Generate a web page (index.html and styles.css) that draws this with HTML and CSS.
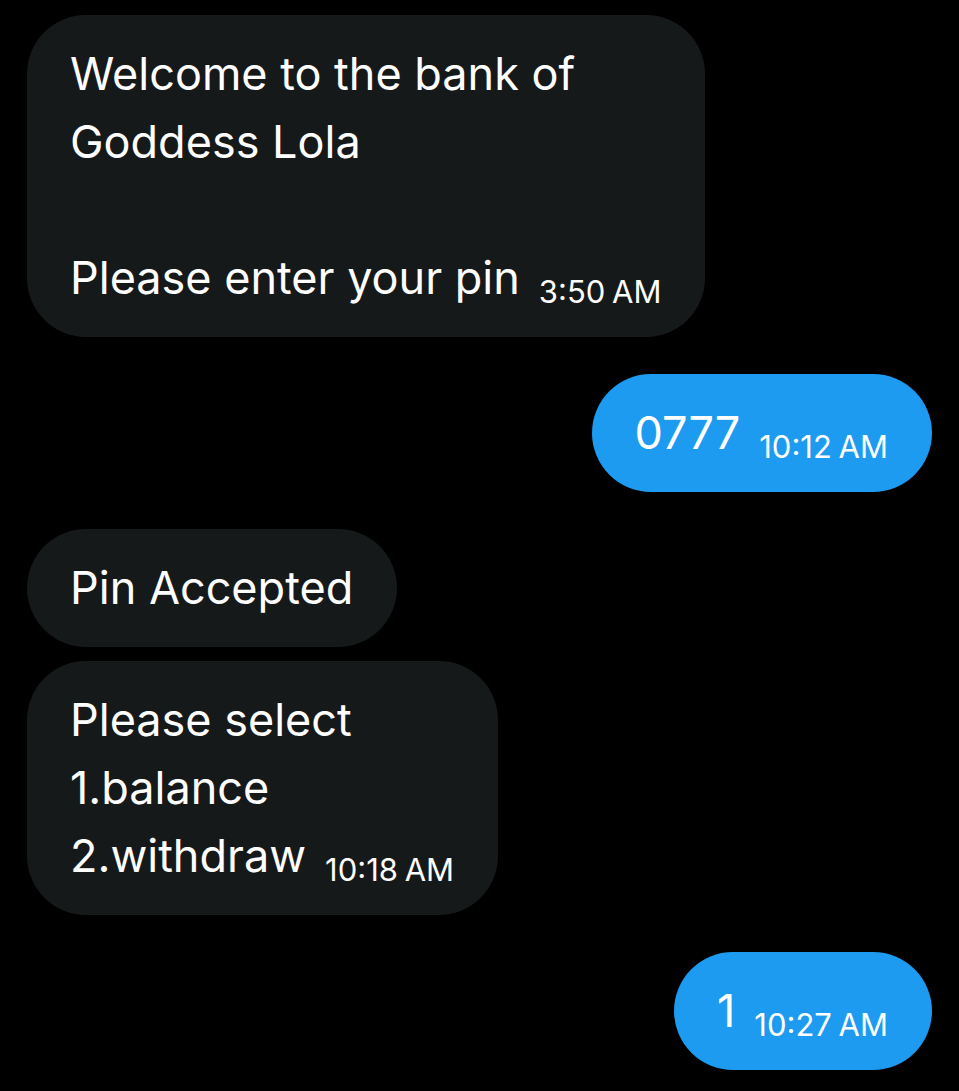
FILE: index.html
```html
<!DOCTYPE html>
<html>
<head>
<meta charset="utf-8">
<link rel="stylesheet" href="styles.css">
</head>
<body>
<div class="chat">
  <div class="msg in gap-after">
    <div class="bubble gray">Welcome to the bank of<br>Goddess Lola<br><br>Please enter your pin<span class="time">3:50 AM</span></div>
  </div>
  <div class="msg out gap-after">
    <div class="bubble blue">0777<span class="time">10:12 AM</span></div>
  </div>
  <div class="msg in">
    <div class="bubble gray">Pin Accepted</div>
  </div>
  <div class="msg in gap-after">
    <div class="bubble gray">Please select<br>1.balance<br>2.withdraw<span class="time">10:18 AM</span></div>
  </div>
  <div class="msg out">
    <div class="bubble blue">1<span class="time">10:27 AM</span></div>
  </div>
</div>
</body>
</html>
```
FILE: styles.css
```css
html, body {
  margin: 0;
  padding: 0;
  background: #000;
}
.chat {
  display: flex;
  flex-direction: column;
  gap: 14px;
  padding: 15px 27px 0 27px;
  font-family: Inter, Roboto, "Liberation Sans", sans-serif;
  color: #fff;
}
.msg {
  display: flex;
}
.msg.in { justify-content: flex-start; }
.msg.out { justify-content: flex-end; }
.gap-after { margin-bottom: 23px; }
.bubble {
  font-size: 45px;
  line-height: 68px;
  padding: 25px 44px 25px 43px;
  border-radius: 59px;
  white-space: nowrap;
}
.bubble.gray { background: #16191a; }
.bubble.blue { background: #1d9bf0; }
.time {
  font-size: 31px;
  line-height: 0;
  margin-left: 19px;
  vertical-align: -9px;
  word-spacing: -2px;
}
```
